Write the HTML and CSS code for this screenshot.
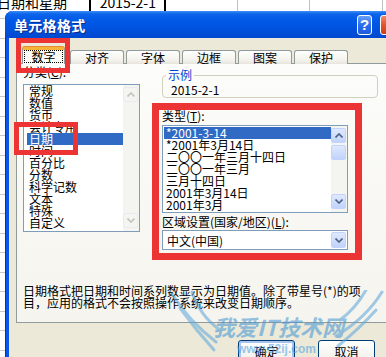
FILE: index.html
```html
<!DOCTYPE html>
<html lang="zh-CN">
  <head>
    <meta charset="UTF-8" />
    <meta name="viewport" content="width=device-width, initial-scale=1.0" />
    <title>单元格格式</title>
    <link rel="stylesheet" href="styles.css">
  </head>
  <body>
    <div class="sheet-row">
      <div class="cell cell-a"><span>日期和星期</span></div>
      <div class="cell cell-b"><span>2015-2-1</span></div>
      <div class="cell cell-c"></div>
      <div class="cell cell-d"></div>
      <div class="cell cell-e"></div>
    </div>

    <div class="window">
      <div class="titlebar">
        <span class="title">单元格格式</span>
        <span class="btn-help">?</span>
        <span class="btn-close"></span>
      </div>
      <div class="dialog-body">
        <div class="tabs">
          <div class="tab active"><span class="focus">数字</span></div>
          <div class="tab first">对齐</div>
          <div class="tab">字体</div>
          <div class="tab">边框</div>
          <div class="tab">图案</div>
          <div class="tab">保护</div>
        </div>
        <div class="panel">
          <div class="columns">
            <div class="col-left">
              <div class="label">分类(<u>C</u>):</div>
              <div class="listbox category">
                <ul class="items">
                  <li>常规</li>
                  <li>数值</li>
                  <li>货币</li>
                  <li>会计专用</li>
                  <li class="selected">日期</li>
                  <li>时间</li>
                  <li>百分比</li>
                  <li>分数</li>
                  <li>科学记数</li>
                  <li>文本</li>
                  <li>特殊</li>
                  <li>自定义</li>
                </ul>
                <div class="scrollbar disabled">
                  <span class="arrow up"><svg width="8" height="5" viewBox="0 0 8 5"><path d="M0.5 4.5 L4 1 L7.5 4.5" /></svg></span>
                  <span class="track"></span>
                  <span class="arrow down"><svg width="8" height="5" viewBox="0 0 8 5"><path d="M0.5 0.5 L4 4 L7.5 0.5" /></svg></span>
                </div>
              </div>
            </div>
            <div class="col-right">
              <fieldset class="sample">
                <legend>示例</legend>
                <div class="sample-value">2015-2-1</div>
              </fieldset>
              <div class="label type-label">类型(<u>T</u>):</div>
              <div class="listbox types">
                <ul class="items">
                  <li class="selected">*2001-3-14</li>
                  <li>*2001年3月14日</li>
                  <li>二〇〇一年三月十四日</li>
                  <li>二〇〇一年三月</li>
                  <li>三月十四日</li>
                  <li>2001年3月14日</li>
                  <li>2001年3月</li>
                </ul>
                <div class="scrollbar">
                  <span class="arrow up"><svg width="8" height="5" viewBox="0 0 8 5"><path d="M0.5 4.5 L4 1 L7.5 4.5" /></svg></span>
                  <span class="thumb"></span>
                  <span class="track"></span>
                  <span class="arrow down"><svg width="8" height="5" viewBox="0 0 8 5"><path d="M0.5 0.5 L4 4 L7.5 0.5" /></svg></span>
                </div>
              </div>
              <div class="label locale-label">区域设置(国家/地区)(<u>L</u>):</div>
              <div class="dropdown">
                <span class="dropdown-text">中文(中国)</span>
                <span class="arrow"><svg width="8" height="5" viewBox="0 0 8 5"><path d="M0.5 0.5 L4 4 L7.5 0.5" /></svg></span>
              </div>
            </div>
          </div>
          <p class="desc">日期格式把日期和时间系列数显示为日期值。除了带星号(*)的项<br>目，应用的格式不会按照操作系统来改变日期顺序。</p>
        </div>
        <div class="buttons">
          <button class="default">确定</button>
          <button>取消</button>
        </div>
      </div>
    </div>

    <!-- annotation boxes drawn over the screenshot -->
    <div class="mark mark-tab"></div>
    <div class="mark mark-date"></div>
    <div class="mark mark-type"></div>

    <svg class="watermark" width="216" height="67" viewBox="0 0 216 67">
      <g fill="none" stroke="#5aa5dc" stroke-width="3" stroke-linecap="round">
        <path d="M2 4 Q18 30 46 52" />
        <path d="M10 18 Q26 40 44 60" />
        <path d="M22 2 Q30 26 50 40" />
        <path d="M212 2 Q196 28 166 46" />
        <path d="M206 20 Q190 38 168 56" />
        <path d="M196 0 Q186 18 170 30" />
      </g>
      <text x="43" y="46" class="wm-title">我爱IT技术网</text>
      <text x="67" y="63" class="wm-url">www.52ij.com</text>
    </svg>
  </body>
</html>
```

FILE: styles.css
```css
body {
  margin: 0;
  width: 386px;
  height: 357px;
  overflow: hidden;
  position: relative;
  font-family: "Noto Sans CJK SC", "Liberation Sans", sans-serif;
  font-size: 12px;
  color: #000;
  background-color: #fff;
  background-image: repeating-linear-gradient(to bottom, transparent 0, transparent 18.5px, #c8c8c8 18.5px, #c8c8c8 19.5px);
}
.sheet-row {
  display: flex;
  height: 11px;
  overflow: hidden;
  background: #fff;
}
.cell {
  height: 11px;
  overflow: hidden;
  box-sizing: border-box;
  border-right: 1px solid #c0c0c0;
  font-size: 14px;
  line-height: 14px;
}
.cell span {
  display: block;
  margin-top: -5px;
  white-space: nowrap;
}
.cell-a {
  width: 89px;
  border-right: none;
}
.cell-a span {
  margin-left: -3px;
}
.cell-b {
  width: 77px;
  border-left: 2px solid #000;
  border-right: 2px solid #000;
  text-align: right;
  padding-right: 8px;
}
.cell-c {
  width: 72px;
}
.cell-d {
  width: 72px;
}
.cell-e {
  width: 73px;
}

.window {
  margin-left: 5px;
  width: 412px;
  height: 350px;
  background: #0a55e4;
  border-radius: 8px 8px 0 0;
  box-shadow: inset 1px 0 #0a2fa8;
  overflow: hidden;
}
.titlebar {
  height: 27px;
  display: flex;
  align-items: center;
  padding-left: 9px;
  background: linear-gradient(to bottom, #3d8ef6 0, #0b64ea 3px, #0058e6 10px, #0054e0 60%, #0048d0 100%);
}
.title {
  color: #fff;
  font-weight: bold;
  font-size: 14px;
  letter-spacing: 0.3px;
  text-shadow: 1px 1px #0a2a8c;
}
.btn-help {
  margin-left: auto;
  width: 15px;
  height: 20px;
  box-sizing: border-box;
  border: 1px solid #fff;
  border-radius: 3px;
  background: linear-gradient(to bottom, #6a9ff8, #2a6ef0 50%, #1d5bdc);
  color: #fff;
  font-family: "Liberation Sans", sans-serif;
  font-weight: bold;
  font-size: 15px;
  line-height: 18px;
  text-align: center;
}
.btn-close {
  margin-left: 8px;
  margin-right: 16px;
  width: 21px;
  height: 20px;
  box-sizing: border-box;
  border: 1px solid #fff;
  border-radius: 3px;
  background: linear-gradient(to bottom, #f08a6a, #e0542a 50%, #c8401e);
}

.dialog-body {
  margin: 0 4px;
  height: 323px;
  background: #ece9d8;
  padding: 9px 0 0 7px;
  box-sizing: border-box;
}
.tabs {
  display: flex;
  align-items: flex-end;
  height: 17px;
  padding-left: 6px;
  margin-bottom: -1px;
  position: relative;
  z-index: 1;
}
.tab {
  width: 52px;
  height: 13px;
  box-sizing: content-box;
  margin-left: 2px;
  border: 1px solid #919b9c;
  border-bottom: none;
  border-radius: 3px 3px 0 0;
  background: linear-gradient(to bottom, #fff, #f3f2ec 70%, #e6e4dc);
  text-align: center;
  line-height: 13px;
}
.tab.first {
  margin-left: 5px;
}
.tab.active {
  width: 41px;
  height: 14px;
  margin-left: 0;
  border-top: 3px solid #f7b33a;
  box-shadow: inset 0 0 0 0 transparent, 0 -1px 0 #e68b2c;
  background: #fbfbf8;
}
.focus {
  display: block;
  margin: 0 1px;
  height: 13px;
  line-height: 12px;
  box-sizing: border-box;
  border: 1px dotted #000;
}

.panel {
  width: 390px;
  height: 260px;
  box-sizing: border-box;
  border: 1px solid #919b9c;
  background: linear-gradient(to bottom, #fcfcfa, #f5f4ee);
}
.columns {
  display: flex;
  height: 186px;
}
.col-left {
  margin-left: 6px;
  width: 117px;
  padding-top: 2px;
}
.label {
  line-height: 12px;
  white-space: nowrap;
}
.listbox {
  display: flex;
  box-sizing: border-box;
  border: 1px solid #7f9db9;
  background: #fff;
}
.listbox.category {
  margin-top: 6px;
  height: 148px;
}
.items {
  list-style: none;
  margin: 0;
  padding: 0;
  flex: 1;
  min-width: 0;
}
.items li {
  line-height: 12px;
  height: 12px;
  padding-left: 2px;
  white-space: nowrap;
  overflow: hidden;
}
.category .items li {
  margin-left: 3px;
}
.items li.selected {
  background: #316ac5;
  color: #fff;
}
.scrollbar {
  width: 16px;
  display: flex;
  flex-direction: column;
  background: #f4f4f0;
  padding-top: 2px;
  box-sizing: border-box;
}
.scrollbar .track {
  flex: 1;
}
.scrollbar .arrow,
.scrollbar .thumb,
.dropdown .arrow {
  display: flex;
  align-items: center;
  justify-content: center;
  width: 15px;
  height: 15px;
  box-sizing: border-box;
  border: 1px solid #c3d3fd;
  border-radius: 2px;
  background: linear-gradient(to bottom, #dfe9fe, #c1d3fb);
}
.scrollbar .arrow path,
.dropdown .arrow path {
  fill: none;
  stroke: #4d6185;
  stroke-width: 1.6;
}
.scrollbar.disabled .arrow {
  border-color: #e8ebf2;
  background: #f4f4f0;
}
.scrollbar.disabled .arrow path {
  stroke: #c3c3bd;
}
.scrollbar .arrow.down {
  margin-bottom: 3px;
}
.scrollbar .thumb {
  margin-top: 2px;
}

.col-right {
  margin-left: 22px;
  width: 216px;
  padding-top: 5px;
}
.sample {
  margin: 0;
  padding: 3px 8px 1px 8px;
  border: 1px solid #d0d0bf;
  border-radius: 4px;
  min-width: 0;
}
.sample legend {
  padding: 0 2px;
  margin-left: -5px;
  color: #0046d5;
  line-height: 12px;
}
.sample-value {
  line-height: 12px;
}
.type-label {
  margin-top: 12px;
}
.listbox.types {
  margin-top: 3px;
  width: 186px;
  height: 88px;
}
.types .items {
  padding-top: 1px;
}
.types .items li {
  margin-left: 1px;
  padding-left: 2px;
}
.types .scrollbar {
  padding-top: 2px;
}
.locale-label {
  margin-top: 2px;
  line-height: 13px;
}
.dropdown {
  margin-top: 2px;
  width: 186px;
  height: 20px;
  box-sizing: border-box;
  border: 1px solid #7f9db9;
  background: #fff;
  display: flex;
  align-items: center;
  padding: 0 1px 0 4px;
}
.dropdown-text {
  flex: 1;
}
.dropdown .arrow {
  height: 16px;
}

.desc {
  margin: 35px 0 0 6px;
  line-height: 12px;
  white-space: nowrap;
}

.buttons {
  display: flex;
  gap: 23px;
  padding-left: 222px;
  margin-top: 17px;
}
button {
  width: 57px;
  height: 23px;
  font-family: inherit;
  font-size: 12px;
  line-height: 12px;
  padding: 0;
  border: 1px solid #003c74;
  border-radius: 3px;
  background: linear-gradient(to bottom, #fff, #f4f3ee 75%, #d8d2c6);
  color: #000;
}
button.default {
  box-shadow: inset 0 0 0 2px #a9c3ef;
}

.mark {
  position: absolute;
  box-sizing: border-box;
  border: 5px solid #ec3434;
}
.mark-tab {
  left: 16px;
  top: 38px;
  width: 54px;
  height: 35px;
}
.mark-date {
  left: 14px;
  top: 122px;
  width: 64px;
  height: 33px;
}
.mark-type {
  left: 152px;
  top: 103px;
  width: 210px;
  height: 157px;
  border-width: 7px;
}

.watermark {
  position: absolute;
  left: 170px;
  top: 290px;
  opacity: 0.55;
}
.wm-title {
  font-family: "Noto Sans CJK SC", sans-serif;
  font-weight: bold;
  font-style: italic;
  font-size: 22px;
  fill: #3f95d6;
}
.wm-url {
  font-family: "Liberation Sans", sans-serif;
  font-weight: bold;
  font-size: 12px;
  fill: #4a9fe0;
}
```
